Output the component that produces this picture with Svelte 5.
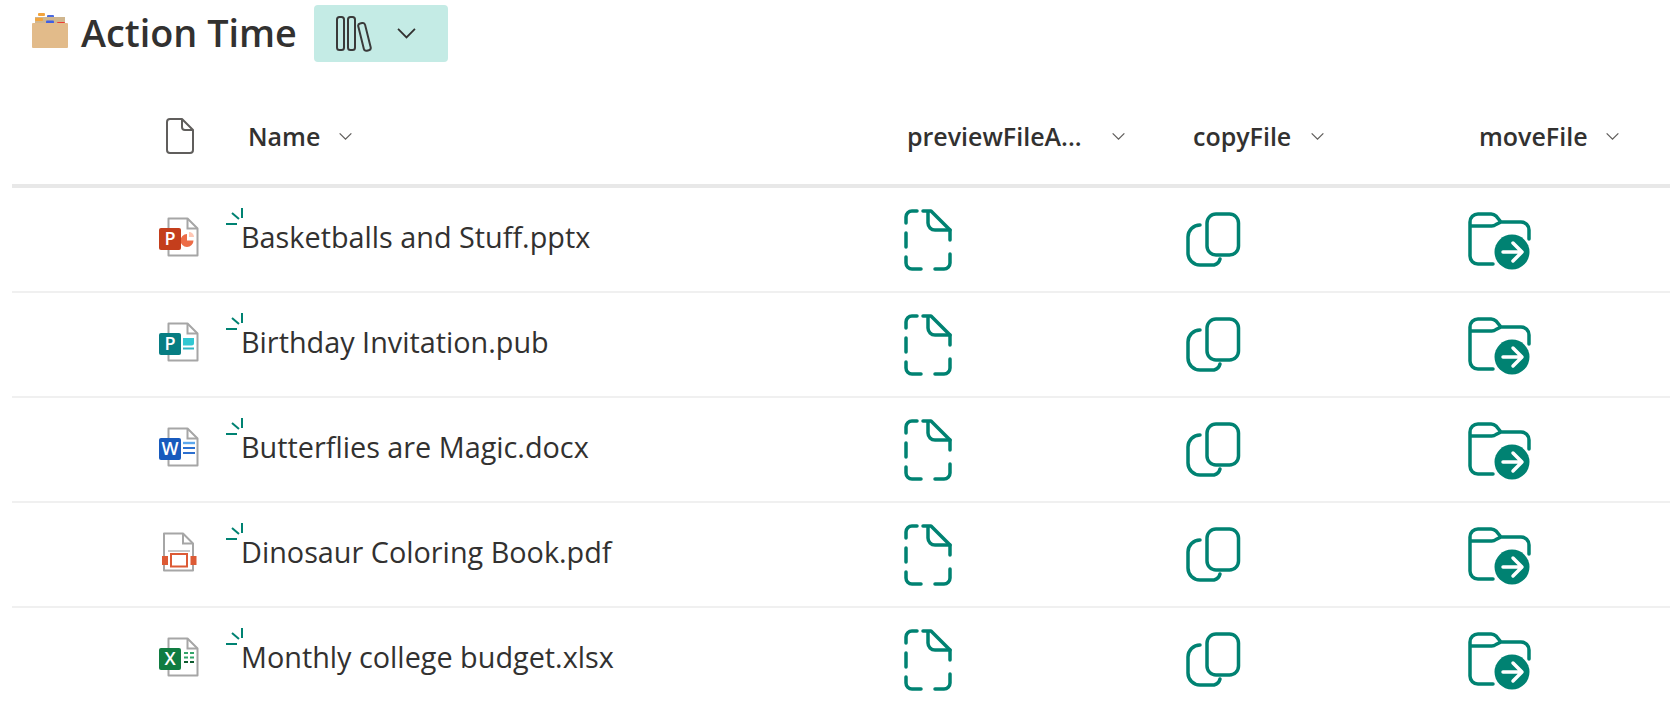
<script lang="ts">
	const files = [
		{ name: 'Basketballs and Stuff.pptx', type: 'ppt' },
		{ name: 'Birthday Invitation.pub', type: 'pub' },
		{ name: 'Butterflies are Magic.docx', type: 'doc' },
		{ name: 'Dinosaur Coloring Book.pdf', type: 'pdf' },
		{ name: 'Monthly college budget.xlsx', type: 'xls' }
	];
	const tiles = {
		ppt: { fill: '#c43e1c', letter: 'P' },
		pub: { fill: '#077d82', letter: 'P' },
		doc: { fill: '#185abd', letter: 'W' },
		xls: { fill: '#107c41', letter: 'X' }
	};
</script>

{#snippet chevron(cls)}
	<svg class={cls} viewBox="0 0 16 10" fill="none"><path d="M1.5 1.5 8 8l6.5-6.5" stroke="currentColor" stroke-width="1.4" /></svg>
{/snippet}

{#snippet fileIcon(type)}
	<svg class="file-icon" width="44" height="44" viewBox="0 0 44 44" fill="none">
		{#if type === 'pdf'}
			<path d="M7 3.5h19l10 10v27H7z" fill="#fff" stroke="#a6a6a6" stroke-width="2" stroke-linejoin="round" />
			<path d="M26 3.5v10h10" stroke="#a6a6a6" stroke-width="2" />
			<path d="M11 21h22" stroke="#c8c8c8" stroke-width="2" />
			<rect x="14" y="24" width="16" height="12.5" fill="#fff" stroke="#dc5a35" stroke-width="2" />
			<rect x="5" y="26" width="6" height="9" fill="#dc5a35" />
			<rect x="33.5" y="26" width="6" height="9" fill="#dc5a35" />
		{:else}
			<path d="M11.5 3.5h19l10 10v27h-29z" fill="#fff" stroke="#a6a6a6" stroke-width="2" stroke-linejoin="round" />
			<path d="M30.5 3.5v10h10" stroke="#a6a6a6" stroke-width="2" />
			{#if type === 'ppt'}
				<path d="M30 19a6.5 6.5 0 1 0 6.5 6.5H30z" fill="#ed6c47" />
				<path d="M32 17a5 5 0 0 1 5 5h-5z" fill="#ffc7b5" />
			{:else if type === 'pub'}
				<path d="M26 18h11v5a2.5 2.5 0 0 1-2.5 2.5H26z" fill="#31c7d2" />
				<path d="M26 28.5h11" stroke="#31b5c4" stroke-width="2" />
			{:else if type === 'doc'}
				<path d="M26 18h12" stroke="#5ca8ee" stroke-width="2.4" />
				<path d="M26 23h12M26 28h12" stroke="#2b6fd0" stroke-width="2.2" />
			{:else}
				<path d="M27 18h4M33 18h4M27 22.5h4M33 22.5h4" stroke="#33a56a" stroke-width="2" />
				<path d="M27 27h4M33 27h4" stroke="#0e5c2f" stroke-width="2" />
			{/if}
			<rect x="2" y="13" width="22" height="22" rx="2" fill={tiles[type].fill} />
			<text x="13" y="30" text-anchor="middle" class="tile-letter">{tiles[type].letter}</text>
		{/if}
	</svg>
{/snippet}

<div class="page">
	<div class="title-bar">
		<svg class="box" width="36" height="36" viewBox="0 0 36 36">
			<rect x="6" y="0" width="7" height="3" rx="1" fill="#f2a33c" />
			<rect x="15" y="2" width="7" height="3" rx="1" fill="#4a6ae0" />
			<rect x="24" y="4" width="8" height="3" rx="1" fill="#e8483c" />
			<rect x="3" y="4" width="30" height="12" fill="#d0b68e" />
			<rect x="3" y="5" width="8" height="3" rx="1" fill="#f2a33c" />
			<rect x="14" y="7.5" width="8" height="3" rx="1" fill="#3d5fe6" />
			<rect x="25" y="9" width="8" height="3" rx="1" fill="#ee3a30" />
			<rect x="0" y="10" width="36" height="25" rx="1" fill="#e2bb8a" />
		</svg>
		<h1>Action Time</h1>
		<button class="lib-btn" type="button">
			<svg width="36" height="36" viewBox="0 0 36 36" fill="none" stroke="#3a3a3a" stroke-width="2">
				<rect x="1" y="1" width="7" height="33" rx="2.5" />
				<rect x="12" y="1" width="7" height="33" rx="2.5" />
				<rect x="25" y="7" width="7" height="28" rx="2.5" transform="rotate(-14 28 21)" />
			</svg>
			{@render chevron('btn-chevron')}
		</button>
	</div>

	<div class="grid head">
		<div class="head-icon">
			<svg width="28" height="36" viewBox="0 0 28 36" fill="none" stroke="#605e5c" stroke-width="2" stroke-linejoin="round">
				<path d="M4 1h12l11 11v20a3 3 0 0 1-3 3H4a3 3 0 0 1-3-3V4a3 3 0 0 1 3-3z" />
				<path d="M16 1v8a3 3 0 0 0 3 3h8" />
			</svg>
		</div>
		<div class="head-cell name-head"><span>Name</span>{@render chevron('head-chevron')}</div>
		<div class="head-cell preview-head"><span>previewFileA...</span>{@render chevron('head-chevron')}</div>
		<div class="head-cell copy-head"><span>copyFile</span>{@render chevron('head-chevron')}</div>
		<div class="head-cell move-head"><span>moveFile</span>{@render chevron('head-chevron')}</div>
	</div>

	{#each files as file}
		<div class="grid row">
			<div class="icon-cell">{@render fileIcon(file.type)}</div>
			<div class="name-cell">
				<svg class="spark" width="18" height="18" viewBox="0 0 18 18" fill="none" stroke="#008272" stroke-width="2">
					<path d="M0 16h11M6 5l7 6M16 0v10" />
				</svg>
				{file.name}
			</div>
			<div class="action">
				<svg width="48" height="62" viewBox="0 0 48 62" fill="none" stroke="#008272" stroke-width="3.5" stroke-linecap="round" stroke-linejoin="round">
					<path d="M13 2H8a6 6 0 0 0-6 6v6M2 24v14M2 48v6a6 6 0 0 0 6 6h9M31 60h9a6 6 0 0 0 6-6v-9M46 31v-10L27 2h-8" />
					<path d="M24 3v11a7 7 0 0 0 7 7h15" />
				</svg>
			</div>
			<div class="action">
				<svg width="56" height="56" viewBox="0 0 56 56" fill="none" stroke="#008272" stroke-width="3.5" stroke-linecap="round">
					<rect x="21" y="2" width="31.5" height="41" rx="9" />
					<path d="M14 13a12 12 0 0 0-12 12v16a12 12 0 0 0 12 12h14a8 8 0 0 0 6-6" />
				</svg>
			</div>
			<div class="action folder">
				<svg width="64" height="60" viewBox="0 0 64 60" fill="none">
					<path d="M25 52H10a8 8 0 0 1-8-8V10a8 8 0 0 1 8-8h13a7 7 0 0 1 5 2l5 6h20a8 8 0 0 1 8 8v9M2 14h21a7 7 0 0 0 5-1.5l5-2.5" stroke="#008272" stroke-width="3.5" stroke-linecap="round" />
					<circle cx="44" cy="40" r="17.5" fill="#008272" />
					<path d="M35 40h18M45 31l9 9-9 9" stroke="#fff" stroke-width="3.5" stroke-linecap="round" stroke-linejoin="round" />
				</svg>
			</div>
		</div>
	{/each}
</div>

<style>
	:global(body) {
		background: #fff;
		overflow: hidden;
	}
	.page {
		height: 704px;
		overflow: hidden;
		font-family: 'Open Sans', 'Noto Sans', sans-serif;
		color: #323130;
	}
	.title-bar {
		display: flex;
		align-items: center;
		height: 62px;
		padding: 5px 0 0 32px;
		box-sizing: border-box;
	}
	.box {
		margin-right: 13px;
		margin-top: -6px;
	}
	h1 {
		margin: -2px 17px 0 0;
		font-size: 37.8px;
		font-weight: 600;
		line-height: 1;
	}
	.lib-btn {
		display: flex;
		align-items: center;
		gap: 24px;
		width: 134px;
		height: 57px;
		padding: 0 0 0 22px;
		border: none;
		border-radius: 4px;
		background: #c4ebe5;
		color: #323130;
	}
	.btn-chevron {
		width: 21px;
		height: 13px;
	}
	.grid {
		display: grid;
		grid-template-columns: 230px 662px 282px 282px 1fr;
		margin-left: 12px;
		align-items: center;
	}
	.head {
		height: 126px;
		padding-top: 26px;
		border-bottom: 4px solid #e8e8e8;
		box-sizing: border-box;
	}
	.head-icon {
		padding-left: 154px;
		display: flex;
	}
	.head-cell {
		display: flex;
		align-items: center;
		font-size: 25px;
		font-weight: 600;
	}
	.name-head {
		padding-left: 6px;
		gap: 18px;
	}
	.preview-head {
		padding-left: 3px;
		gap: 29px;
	}
	.copy-head {
		padding-left: 7px;
		gap: 19px;
	}
	.move-head {
		padding-left: 11px;
		gap: 17px;
	}
	.head-chevron {
		width: 15px;
		height: 9px;
		color: #605e5c;
	}
	.row {
		height: 105px;
		border-bottom: 2px solid #f0f0f0;
		box-sizing: border-box;
	}
	.icon-cell {
		padding: 0 0 6px 145px;
		display: flex;
	}
	.name-cell {
		position: relative;
		left: -1px;
		font-size: 28.8px;
		line-height: 36px;
		padding-bottom: 6px;
	}
	.spark {
		position: absolute;
		left: -15px;
		top: -11px;
	}
	.action {
		display: flex;
	}
	.folder {
		padding-top: 4px;
	}
	.tile-letter {
		font-family: 'Open Sans', sans-serif;
		font-size: 18px;
		font-weight: 600;
		fill: #fff;
	}
</style>
